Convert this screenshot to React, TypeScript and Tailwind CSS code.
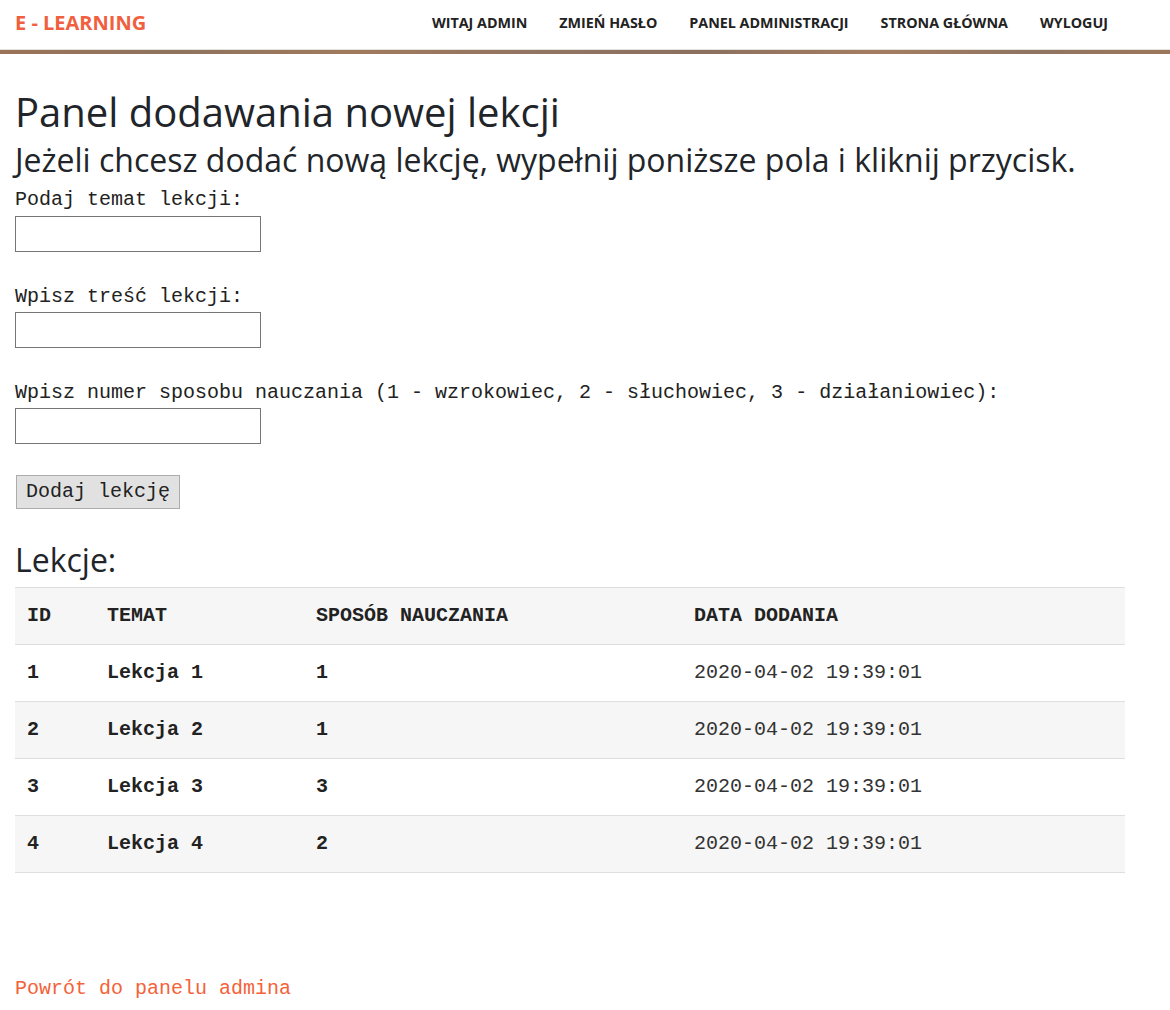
import React from "react";

const lessons = [
  { id: 1, topic: "Lekcja 1", method: 1, date: "2020-04-02 19:39:01" },
  { id: 2, topic: "Lekcja 2", method: 1, date: "2020-04-02 19:39:01" },
  { id: 3, topic: "Lekcja 3", method: 3, date: "2020-04-02 19:39:01" },
  { id: 4, topic: "Lekcja 4", method: 2, date: "2020-04-02 19:39:01" },
];

const navLinks = ["Witaj admin", "Zmień hasło", "Panel administracji", "Strona główna", "Wyloguj"];

export default function App() {
  return (
    <div className="min-h-screen bg-white text-[#212529] font-['Open_Sans',sans-serif]">
      {/* Top bar */}
      <header className="bg-white">
        <div className="flex h-[49px] items-center justify-between pb-[4px] pl-[15px] pr-[46px]">
          <a className="text-[20px] font-bold text-[#f05f40]">E - LEARNING</a>
          <nav className="flex items-center">
            {navLinks.map((l) => (
              <a key={l} className="px-4 text-[14.3px] font-bold uppercase text-[#222]">
                {l}
              </a>
            ))}
          </nav>
        </div>
        <div className="h-px bg-[#e4e0dc]" />
        <div className="h-1 bg-[linear-gradient(90deg,#9a7358_0%,#8e735f_15%,#a07a5c_30%,#927462_45%,#8b7060_60%,#a47d60_75%,#8f7462_88%,#9c775a_100%)]" />
      </header>

      <main className="px-[15px] pt-[34px]">
        <h1 className="text-[40px] leading-[48px] text-[#212529]">Panel dodawania nowej lekcji</h1>
        <h3 className="mt-[2px] text-[32px] leading-[44px] text-[#212529]">
          Jeżeli chcesz dodać nową lekcję, wypełnij poniższe pola i kliknij przycisk.
        </h3>

        <form className="font-['Liberation_Mono','Courier_New',monospace] text-[20px] text-[#222]">
          <label className="block leading-[24px] mt-[6px]">Podaj temat lekcji:</label>
          <input className="block w-[246px] h-9 border border-[#767676] bg-white mt-[4px]" />

          <label className="block leading-[24px] mt-[33px]">Wpisz treść lekcji:</label>
          <input className="block w-[246px] h-9 border border-[#767676] bg-white mt-[3px]" />

          <label className="block leading-[24px] mt-[33px]">
            Wpisz numer sposobu nauczania (1 - wzrokowiec, 2 - słuchowiec, 3 - działaniowiec):
          </label>
          <input className="block w-[246px] h-9 border border-[#767676] bg-white mt-[3px]" />

          <button
            type="button"
            className="mt-[31px] ml-px h-[34px] px-[9px] border border-[#adadad] bg-[#e1e1e1] text-[20px] text-[#222] leading-none"
          >
            Dodaj lekcję
          </button>
        </form>

        <h2 className="mt-[33px] text-[32px] leading-[36px] text-[#212529]">Lekcje:</h2>

        <table className="mt-[9px] w-[1110px] border-collapse font-['Liberation_Mono','Courier_New',monospace] text-[20px]">
          <thead>
            <tr className="bg-[#f6f6f6] border-t border-b border-[#dedede]">
              <th className="w-[80px] h-[57px] px-3 text-left font-bold text-[#222]">ID</th>
              <th className="w-[209px] px-3 text-left font-bold text-[#222]">TEMAT</th>
              <th className="w-[378px] px-3 text-left font-bold text-[#222]">SPOSÓB NAUCZANIA</th>
              <th className="px-3 text-left font-bold text-[#222]">DATA DODANIA</th>
            </tr>
          </thead>
          <tbody>
            {lessons.map((l, i) => (
              <tr
                key={l.id}
                className={`border-b border-[#dedede] ${i % 2 === 1 ? "bg-[#f6f6f6]" : "bg-white"}`}
              >
                <td className="h-[57px] px-3 font-bold text-[#222]">{l.id}</td>
                <td className="px-3 font-bold text-[#222]">{l.topic}</td>
                <td className="px-3 font-bold text-[#222]">{l.method}</td>
                <td className="px-3 text-[#333]">{l.date}</td>
              </tr>
            ))}
          </tbody>
        </table>

        <div className="mt-[103px] pb-4">
          <a className="font-['Liberation_Mono','Courier_New',monospace] text-[20px] leading-[24px] text-[#f4623a]">
            Powrót do panelu admina
          </a>
        </div>
      </main>
    </div>
  );
}
